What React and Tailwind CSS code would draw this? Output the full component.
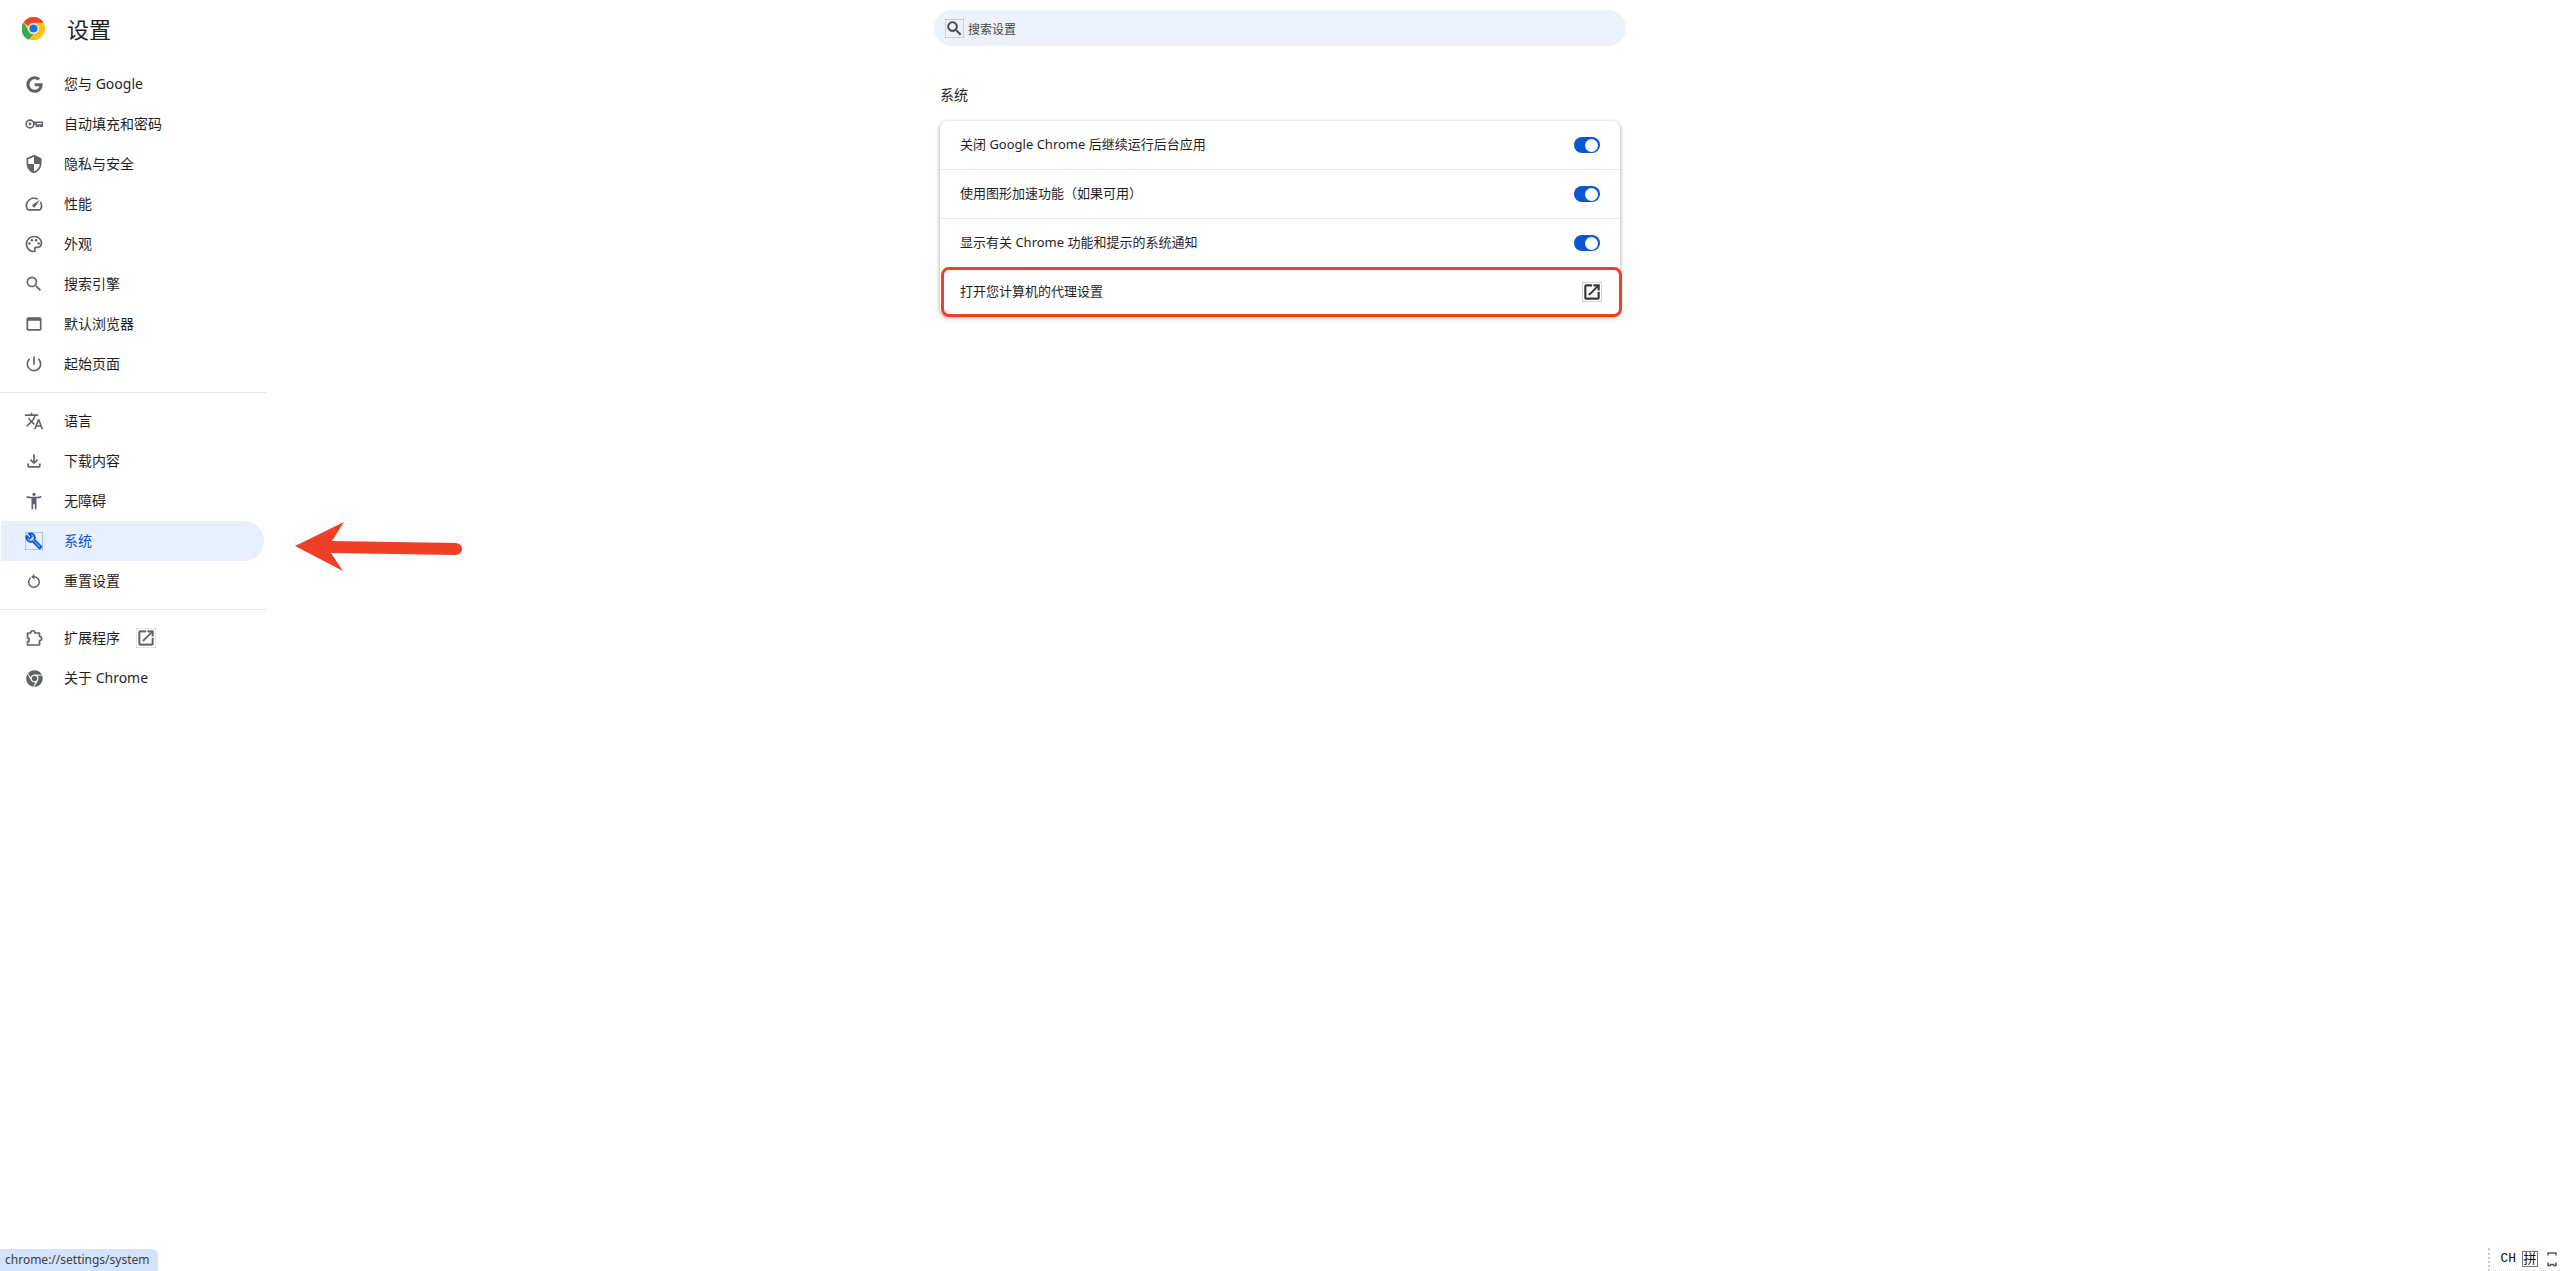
import React from "react";
import {
  MdSecurity, MdOutlineSpeed, MdOutlinePalette, MdSearch, MdOutlineWebAsset,
  MdPowerSettingsNew, MdOutlineTranslate, MdOutlineFileDownload, MdAccessibilityNew, MdOutlineBuild,
  MdOpenInNew,
} from "react-icons/md";
import { FaGoogle, FaChrome } from "react-icons/fa";

function KeyIcon({ className }) {
  return (
    <svg viewBox="0 0 20 20" className={className} fill="none" stroke="currentColor">
      <circle cx="6" cy="10" r="3.9" strokeWidth="1.6" />
      <circle cx="6" cy="10" r="1.4" fill="currentColor" stroke="none" />
      <path d="M10 8.3h8.2v4h-1.7v-1.2h-2v1.2h-2v-2.3H10" strokeWidth="1.5" />
    </svg>
  );
}

function ResetIcon({ className }) {
  return (
    <svg viewBox="0 0 20 20" className={className} fill="none" stroke="currentColor">
      <path d="M6.4 6.4a5.9 5.9 0 1 0 3.6-1.2" strokeWidth="1.7" />
      <path d="M10.4 2.2v6l-3.6-3z" fill="currentColor" stroke="none" />
    </svg>
  );
}

function ExtensionIcon({ className }) {
  return (
    <svg viewBox="0 0 20 20" className={className} fill="none" stroke="currentColor" strokeWidth="1.7" strokeLinejoin="round">
      <path d="M3.5 5h3.2c0-3 4.2-3 4.2 0h4.6v3.3c2.8 0 2.8 4.4 0 4.4V17H3.5v-3.2c2.2 0 2.2-4 0-4z" />
    </svg>
  );
}

const group1 = [
  [FaGoogle, "您与 Google", "h-[17px] w-[17px]"],
  [KeyIcon, "自动填充和密码"],
  [MdSecurity, "隐私与安全"],
  [MdOutlineSpeed, "性能"],
  [MdOutlinePalette, "外观"],
  [MdSearch, "搜索引擎"],
  [MdOutlineWebAsset, "默认浏览器"],
  [MdPowerSettingsNew, "起始页面"],
];
const group2 = [
  [MdOutlineTranslate, "语言"],
  [MdOutlineFileDownload, "下载内容"],
  [MdAccessibilityNew, "无障碍"],
  [MdOutlineBuild, "系统", "h-[18px] w-[18px] stroke-current stroke-[0.7]", true],
  [ResetIcon, "重置设置", "h-[18px] w-[18px]"],
];

function NavRow({ icon: Icon, label, size, active, ext }) {
  return (
    <div
      className={
        "ml-px flex h-10 w-[263px] items-center gap-5 rounded-r-full pl-[23px] text-sm " +
        (active ? "bg-[#e8f0fe] text-[#0b57d0]" : "text-[#1f1f1f]")
      }
    >
      <span className={"flex h-5 w-5 items-center justify-center " + (active ? "text-[#0b57d0]" : "text-[#5f6368]")}>
        <Icon className={size || "h-5 w-5"} />
      </span>
      <div className="flex items-center gap-4">
        <span>{label}</span>
        {ext && <MdOpenInNew className="h-5 w-5 text-[#5f6368] stroke-current stroke-[0.4]" />}
      </div>
    </div>
  );
}

function Toggle() {
  return (
    <div className="flex h-4 w-[26px] items-center justify-end rounded-full bg-[#0b57d0] pr-[2px]">
      <div className="h-[13px] w-[13px] rounded-full bg-white" />
    </div>
  );
}

function ChromeLogo() {
  return (
    <svg viewBox="0 0 48 48" className="h-[23px] w-[23px]">
      <circle cx="24" cy="24" r="24" fill="#fbc116" />
      <path d="M24 0a24 24 0 0 1 20.8 12H24a12 12 0 0 0-10.4 6L3.2 12A24 24 0 0 1 24 0z" fill="#ea4335" />
      <path d="M3.2 12l10.4 18a12 12 0 0 0 10.4 6L13.6 47.6A24 24 0 0 1 3.2 12z" fill="#34a853" />
      <circle cx="24" cy="24" r="11" fill="#fff" />
      <circle cx="24" cy="24" r="8.6" fill="#1a73e8" />
    </svg>
  );
}

function Card({ label, children, border, first, extra }) {
  return (
    <div className={"relative flex items-center justify-between px-5 text-[13px] text-[#1f1f1f] " + (first ? "h-12 " : "h-[49px] ") + (border ? "border-t border-[#e9ebed]" : "")}>
      <span>{label}</span>
      {children}
      {extra}
    </div>
  );
}

export default function App() {
  return (
    <div className="relative flex h-[1271px] w-full overflow-hidden bg-white font-['Noto_Sans','Noto_Sans_CJK_SC',sans-serif]">
      <aside className="w-[266px] shrink-0">
        <div className="flex h-14 items-center pl-[22px]">
          <ChromeLogo />
          <span className="ml-[22px] pt-[2px] text-[22px] text-[#1f1f1f]">设置</span>
        </div>
        <div className="h-2" />
        {group1.map(([icon, label, size]) => <NavRow key={label} icon={icon} label={label} size={size} />)}
        <div className="my-2 h-px bg-[#e9e9e9]" />
        {group2.map(([icon, label, size, active]) => <NavRow key={label} icon={icon} label={label} size={size} active={active} />)}
        <div className="my-2 h-px bg-[#e9e9e9]" />
        <NavRow icon={ExtensionIcon} label="扩展程序" ext />
        <NavRow icon={FaChrome} label="关于 Chrome" size="h-[17px] w-[17px]" />
      </aside>

      <main className="ml-[668px] w-[692px] pt-[10px]">
        <div className="flex h-9 items-center rounded-full bg-[#edf2fa] pl-[11px] text-xs text-[#474747]">
          <MdSearch className="h-[19px] w-[19px] stroke-current stroke-[0.5]" />
          <span className="ml-1 pt-1">搜索设置</span>
        </div>
        <div className="ml-[6px] w-[680px]">
          <h2 className="mt-[39px] h-5 text-[14px] leading-5 font-normal text-[#1f1f1f]">系统</h2>
          <div className="mt-[16px] rounded-lg bg-white shadow-[0_1px_3px_0_rgba(60,64,67,0.3),0_2px_5px_1px_rgba(60,64,67,0.2)]">
            <Card label="关闭 Google Chrome 后继续运行后台应用" first><Toggle /></Card>
            <Card label="使用图形加速功能（如果可用）" border><Toggle /></Card>
            <Card label="显示有关 Chrome 功能和提示的系统通知" border><Toggle /></Card>
            <Card
              label="打开您计算机的代理设置"
              extra={<div className="absolute top-0 -right-[2px] -bottom-px left-px rounded-lg border-[3.5px] border-[#ee4026]" />}
            >
              <MdOpenInNew className="-mr-[2px] h-5 w-5 text-[#333] stroke-current stroke-[0.5]" />
            </Card>
          </div>
        </div>
      </main>

      <svg className="absolute left-[290px] top-[518px] h-[58px] w-[178px]" viewBox="290 518 178 58">
        <path d="M295 546 L344 522 L332 541 L456 543 Q462 544 462 549 Q462 554 456 555 L331 553 L343 571 Z" fill="#ee4026" />
      </svg>

      <div className="absolute bottom-0 left-0 flex h-[22px] w-[158px] items-center rounded-tr-md bg-[#d3e3fd] pl-[5px] text-xs text-[#3c4043]">
        chrome://settings/system
      </div>

      <div className="absolute bottom-0 right-0 flex h-[23px] items-center border-b border-l-2 border-dotted border-b-[#e5e5e5] border-l-[#ccc] pl-[10px] pr-[3px]">
        <span className="font-['Liberation_Mono',monospace] text-[13px] text-[#111]">CH</span>
        <span className="ml-[6px] flex h-[16px] w-[16px] items-center justify-center border border-[#777] text-[13px] text-[#111]">拼</span>
        <svg viewBox="0 0 10 16" className="ml-[9px] h-[16px] w-[10px]">
          <path d="M1 4.5V2h8v2.5M1 11.5v3h2.5v-1h3v1H9v-3" fill="none" stroke="#555" strokeWidth="1.5" />
        </svg>
      </div>
    </div>
  );
}
